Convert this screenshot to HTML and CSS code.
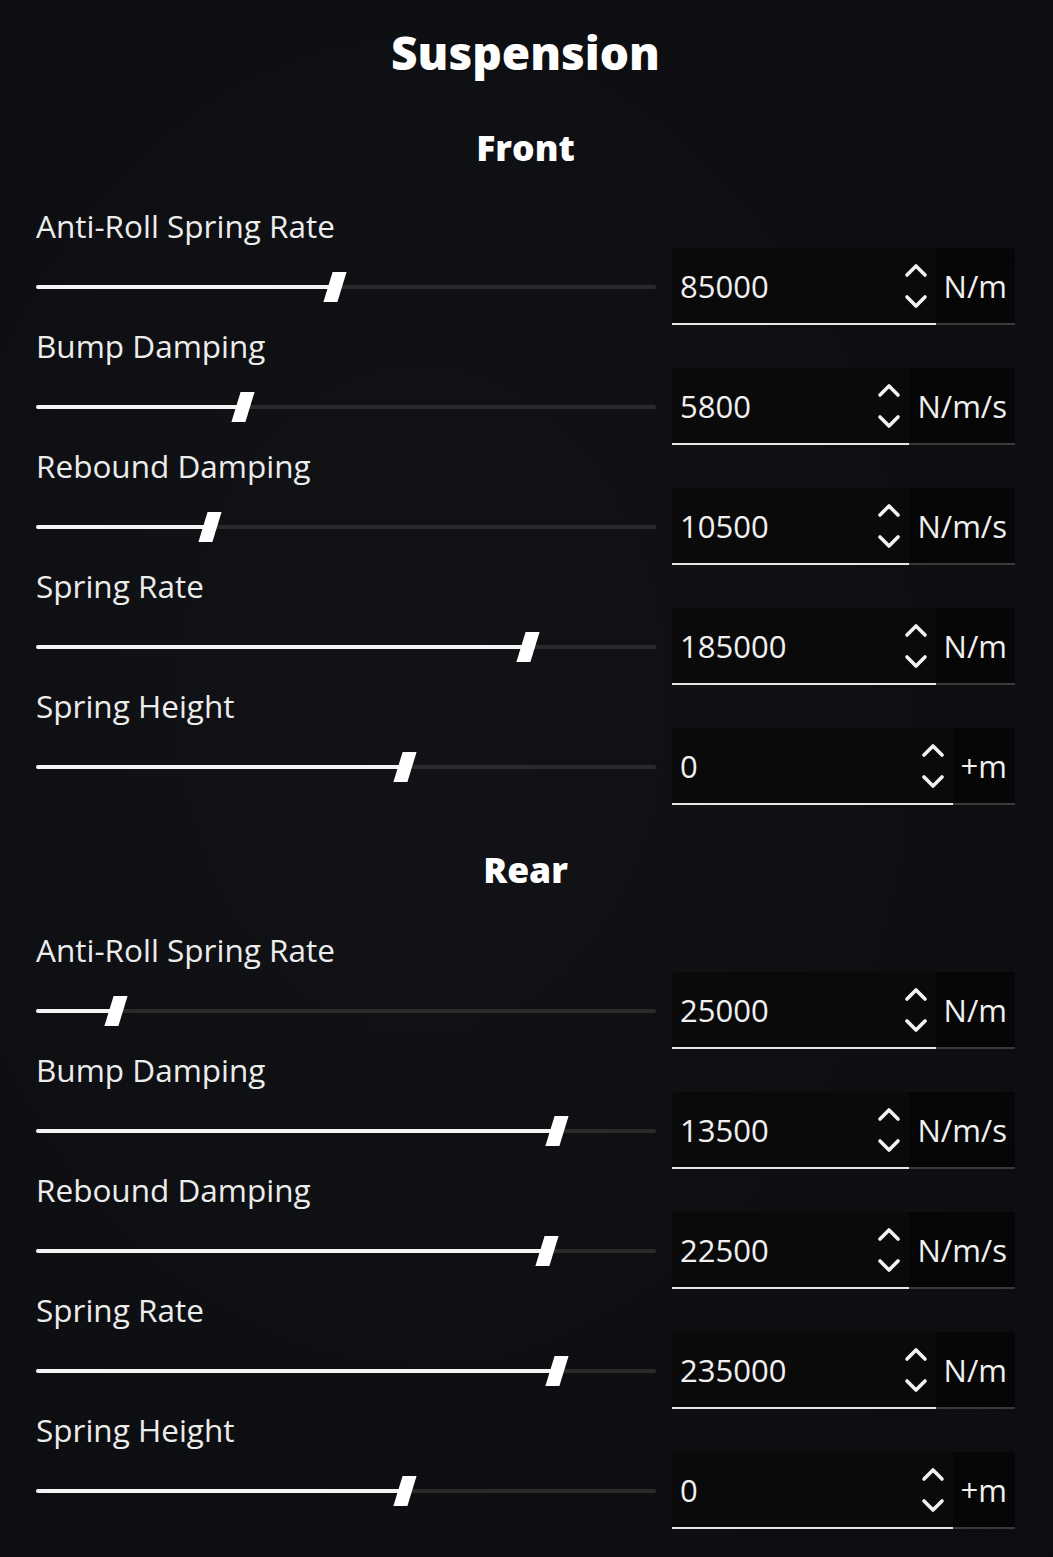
FILE: index.html
```html
<!DOCTYPE html>
<html lang="en">
<head>
<meta charset="utf-8">
<title>Suspension</title>
<link rel="stylesheet" href="styles.css">
</head>
<body>
<main class="panel">
  <h1 class="title">Suspension</h1>

  <section class="group">
    <h2 class="group-title">Front</h2>

    <div class="field">
      <div class="field-label">Anti-Roll Spring Rate</div>
      <div class="field-control">
        <div class="slider"><div class="track"><div class="fill" style="width:48.2%"></div><div class="thumb" style="left:48.2%"></div></div></div>
        <div class="number">
          <div class="number-input"><span class="value">85000</span><span class="spin"><svg viewBox="0 0 24 50" width="24" height="50"><path d="M3 14 L12 5 L21 14 M3 36 L12 45 L21 36"/></svg></span></div>
          <span class="unit">N/m</span>
        </div>
      </div>
    </div>

    <div class="field">
      <div class="field-label">Bump Damping</div>
      <div class="field-control">
        <div class="slider"><div class="track"><div class="fill" style="width:33.4%"></div><div class="thumb" style="left:33.4%"></div></div></div>
        <div class="number">
          <div class="number-input"><span class="value">5800</span><span class="spin"><svg viewBox="0 0 24 50" width="24" height="50"><path d="M3 14 L12 5 L21 14 M3 36 L12 45 L21 36"/></svg></span></div>
          <span class="unit">N/m/s</span>
        </div>
      </div>
    </div>

    <div class="field">
      <div class="field-label">Rebound Damping</div>
      <div class="field-control">
        <div class="slider"><div class="track"><div class="fill" style="width:28.1%"></div><div class="thumb" style="left:28.1%"></div></div></div>
        <div class="number">
          <div class="number-input"><span class="value">10500</span><span class="spin"><svg viewBox="0 0 24 50" width="24" height="50"><path d="M3 14 L12 5 L21 14 M3 36 L12 45 L21 36"/></svg></span></div>
          <span class="unit">N/m/s</span>
        </div>
      </div>
    </div>

    <div class="field">
      <div class="field-label">Spring Rate</div>
      <div class="field-control">
        <div class="slider"><div class="track"><div class="fill" style="width:79.4%"></div><div class="thumb" style="left:79.4%"></div></div></div>
        <div class="number">
          <div class="number-input"><span class="value">185000</span><span class="spin"><svg viewBox="0 0 24 50" width="24" height="50"><path d="M3 14 L12 5 L21 14 M3 36 L12 45 L21 36"/></svg></span></div>
          <span class="unit">N/m</span>
        </div>
      </div>
    </div>

    <div class="field">
      <div class="field-label">Spring Height</div>
      <div class="field-control">
        <div class="slider"><div class="track"><div class="fill" style="width:59.5%"></div><div class="thumb" style="left:59.5%"></div></div></div>
        <div class="number">
          <div class="number-input"><span class="value">0</span><span class="spin"><svg viewBox="0 0 24 50" width="24" height="50"><path d="M3 14 L12 5 L21 14 M3 36 L12 45 L21 36"/></svg></span></div>
          <span class="unit">+m</span>
        </div>
      </div>
    </div>
  </section>

  <section class="group">
    <h2 class="group-title">Rear</h2>

    <div class="field">
      <div class="field-label">Anti-Roll Spring Rate</div>
      <div class="field-control">
        <div class="slider"><div class="track"><div class="fill" style="width:12.9%"></div><div class="thumb" style="left:12.9%"></div></div></div>
        <div class="number">
          <div class="number-input"><span class="value">25000</span><span class="spin"><svg viewBox="0 0 24 50" width="24" height="50"><path d="M3 14 L12 5 L21 14 M3 36 L12 45 L21 36"/></svg></span></div>
          <span class="unit">N/m</span>
        </div>
      </div>
    </div>

    <div class="field">
      <div class="field-label">Bump Damping</div>
      <div class="field-control">
        <div class="slider"><div class="track"><div class="fill" style="width:84%"></div><div class="thumb" style="left:84%"></div></div></div>
        <div class="number">
          <div class="number-input"><span class="value">13500</span><span class="spin"><svg viewBox="0 0 24 50" width="24" height="50"><path d="M3 14 L12 5 L21 14 M3 36 L12 45 L21 36"/></svg></span></div>
          <span class="unit">N/m/s</span>
        </div>
      </div>
    </div>

    <div class="field">
      <div class="field-label">Rebound Damping</div>
      <div class="field-control">
        <div class="slider"><div class="track"><div class="fill" style="width:82.4%"></div><div class="thumb" style="left:82.4%"></div></div></div>
        <div class="number">
          <div class="number-input"><span class="value">22500</span><span class="spin"><svg viewBox="0 0 24 50" width="24" height="50"><path d="M3 14 L12 5 L21 14 M3 36 L12 45 L21 36"/></svg></span></div>
          <span class="unit">N/m/s</span>
        </div>
      </div>
    </div>

    <div class="field">
      <div class="field-label">Spring Rate</div>
      <div class="field-control">
        <div class="slider"><div class="track"><div class="fill" style="width:84%"></div><div class="thumb" style="left:84%"></div></div></div>
        <div class="number">
          <div class="number-input"><span class="value">235000</span><span class="spin"><svg viewBox="0 0 24 50" width="24" height="50"><path d="M3 14 L12 5 L21 14 M3 36 L12 45 L21 36"/></svg></span></div>
          <span class="unit">N/m</span>
        </div>
      </div>
    </div>

    <div class="field">
      <div class="field-label">Spring Height</div>
      <div class="field-control">
        <div class="slider"><div class="track"><div class="fill" style="width:59.5%"></div><div class="thumb" style="left:59.5%"></div></div></div>
        <div class="number">
          <div class="number-input"><span class="value">0</span><span class="spin"><svg viewBox="0 0 24 50" width="24" height="50"><path d="M3 14 L12 5 L21 14 M3 36 L12 45 L21 36"/></svg></span></div>
          <span class="unit">+m</span>
        </div>
      </div>
    </div>
  </section>
</main>
</body>
</html>
```

FILE: styles.css
```css
html, body {
  margin: 0;
  padding: 0;
}
body {
  background: radial-gradient(ellipse at 40% 45%, #121316 0%, #0e0f12 55%, #0c0d10 100%);
  color: #f2f2f2;
  font-family: "Open Sans", "Noto Sans", sans-serif;
  min-height: 1557px;
}
.panel {
  padding: 20px 38px 0 36px;
  display: flex;
  flex-direction: column;
}
.title {
  margin: 0;
  text-align: center;
  font-size: 46px;
  font-weight: 800;
  line-height: 64px;
  color: #fff;
}
.group {
  display: flex;
  flex-direction: column;
  margin-top: 41px;
}
.group-title {
  margin: 0 0 37px;
  text-align: center;
  font-size: 35.5px;
  font-weight: 800;
  line-height: 44px;
  color: #fff;
}
.group + .group .group-title {
  margin-bottom: 39px;
}
.field {
  display: flex;
  flex-direction: column;
  gap: 2px;
  margin-bottom: 1px;
}
.field-label {
  font-size: 31.5px;
  line-height: 40px;
  color: #ececec;
}
.field-control {
  display: flex;
  align-items: center;
  gap: 16px;
  height: 77px;
}
.slider {
  flex: 0 0 620px;
}
.track {
  position: relative;
  height: 4px;
  background: #2a2a2a;
  border-radius: 2px;
}
.fill {
  height: 100%;
  background: #f4f4f4;
  border-radius: 2px;
}
.thumb {
  position: absolute;
  top: 50%;
  width: 14px;
  height: 30px;
  background: #fff;
  transform: translate(-50%, -50%) skewX(-17deg);
}
.number {
  flex: 1;
  display: flex;
  align-self: stretch;
  background: #0a0a0b;
  border-radius: 4px 4px 0 0;
}
.number-input {
  flex: 1;
  display: flex;
  align-items: center;
  justify-content: space-between;
  padding: 0 8px 0 8px;
  border-bottom: 2px solid #e6e6e6;
}
.value {
  font-size: 31px;
  color: #f0f0f0;
}
.spin {
  display: flex;
  align-items: center;
}
.spin svg path {
  fill: none;
  stroke: #f2f2f2;
  stroke-width: 3.6;
  stroke-linecap: round;
  stroke-linejoin: round;
}
.unit {
  display: flex;
  align-items: center;
  padding: 0 8px;
  font-size: 31px;
  color: #f0f0f0;
  background: #060606;
  border-bottom: 2px solid #3a3a3a;
  border-radius: 0 4px 0 0;
}
```
